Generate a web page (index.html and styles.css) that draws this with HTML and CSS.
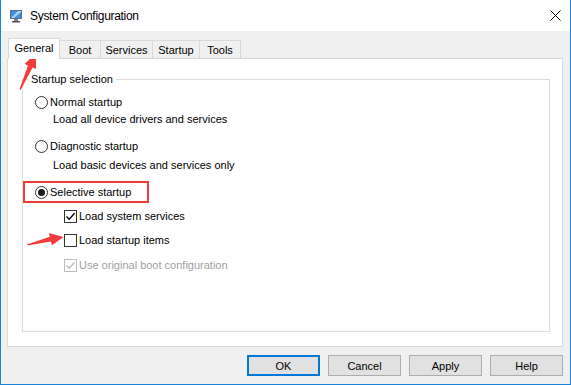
FILE: index.html
```html
<!DOCTYPE html>
<html lang="en">

<head>
    <meta charset="UTF-8">
    <title>System Configuration</title>
    <link rel="stylesheet" href="styles.css">
</head>

<body>
    <div class="window">
        <div class="titlebar">
            <svg class="app-icon" width="14" height="14" viewBox="0 0 14 14">
                <rect x="1" y="1" width="12" height="9" fill="#5d6f86" />
                <rect x="2" y="2" width="10" height="7" fill="#3f8ee0" />
                <path d="M2 9 L9 2 L12 2 L12 3 L5 9 Z" fill="#a9d3f7" />
                <rect x="5" y="10" width="4" height="2" fill="#7a7f86" />
                <rect x="3" y="12" width="8" height="1.5" fill="#4f5459" />
            </svg>
            <span class="title">System Configuration</span>
            <svg class="close" width="11" height="11" viewBox="0 0 11 11">
                <path d="M0.5 0.5 L10.5 10.5 M10.5 0.5 L0.5 10.5" stroke="#000" stroke-width="1" />
            </svg>
        </div>

        <div class="content">
            <div class="tabs">
                <div class="tab tab_active tab-general">General</div>
                <div class="tab tab-boot">Boot</div>
                <div class="tab tab-services">Services</div>
                <div class="tab tab-startup">Startup</div>
                <div class="tab tab-tools">Tools</div>
            </div>

            <div class="panel">
                <fieldset class="group">
                    <legend>Startup selection</legend>

                    <div class="option row-normal">
                        <span class="radio"></span>Normal startup
                    </div>
                    <div class="desc row-normal-desc">Load all device drivers and services</div>

                    <div class="option row-diag">
                        <span class="radio"></span>Diagnostic startup
                    </div>
                    <div class="desc row-diag-desc">Load basic devices and services only</div>

                    <div class="option row-selective">
                        <span class="radio radio_checked"></span>Selective startup
                    </div>

                    <div class="check-row row-services">
                        <span class="checkbox">
                            <svg width="11" height="11" viewBox="0 0 11 11">
                                <path d="M1.5 5.5 L4.2 8.3 L9.6 2.3" fill="none" stroke="#000" stroke-width="1.3" />
                            </svg>
                        </span>Load system services
                    </div>
                    <div class="check-row row-items">
                        <span class="checkbox"></span>Load startup items
                    </div>
                    <div class="check-row check_disabled row-boot">
                        <span class="checkbox">
                            <svg width="11" height="11" viewBox="0 0 11 11">
                                <path d="M1.5 5.5 L4.2 8.3 L9.6 2.3" fill="none" stroke="#bcbcbc" stroke-width="1.3" />
                            </svg>
                        </span>Use original boot configuration
                    </div>
                </fieldset>
            </div>

            <div class="buttons">
                <button class="btn btn_default">OK</button>
                <button class="btn">Cancel</button>
                <button class="btn">Apply</button>
                <button class="btn">Help</button>
            </div>
        </div>

        <!-- Red annotations drawn over the dialog. -->
        <svg class="annotations" width="571" height="385" viewBox="0 0 571 385">
            <polygon points="36,53 36,69 32.6,67.6 20.6,90 19.4,89.4 28,65.6 24.6,64" fill="#f23c3c" />
            <polygon points="63.5,237 52,245.2 51,241.6 27.5,245.6 27,244.4 49.8,236.8 48.9,233" fill="#f23c3c" />
            <rect x="24" y="182" width="124" height="20" fill="none" stroke="#f23c3c" stroke-width="2" />
        </svg>
    </div>
</body>

</html>
```

FILE: styles.css
```css
* {
    box-sizing: border-box;
}

body {
    margin: 0;
    font-family: "Segoe UI", "Liberation Sans", Arial, sans-serif;
    font-size: 11px;
    color: #000;
    background-color: #f0f0f0;
}

.window {
    position: relative;
    width: 571px;
    height: 385px;
    display: flex;
    flex-direction: column;
    border: 1px solid #1883d7;
    border-top: none;
    background-color: #f0f0f0;
}

.titlebar {
    height: 31px;
    flex-shrink: 0;
    display: flex;
    align-items: center;
    padding-left: 8px;
    padding-right: 9px;
    background-color: white;
}

.app-icon {
    margin-right: 7px;
}

.title {
    flex: 1;
    font-size: 12px;
    letter-spacing: -0.3px;
}

.content {
    flex: 1;
    display: flex;
    flex-direction: column;
    padding: 7px 7px 8px 6px;
}

.tabs {
    height: 21px;
    margin-bottom: -1px;
    padding-left: 1px;
    display: flex;
    align-items: flex-end;
}

.tab {
    height: 19px;
    margin-left: -1px;
    display: flex;
    align-items: center;
    justify-content: center;
    border: 1px solid #d9d9d9;
    border-bottom: none;
    background-color: #f0f0f0;
}

.tab:first-child {
    margin-left: 0;
}

.tab_active {
    position: relative;
    z-index: 1;
    height: 21px;
    padding-bottom: 2px;
    background-color: white;
}

.tab-general {
    width: 52px;
}

.tab-boot {
    width: 42px;
}

.tab-services {
    width: 53px;
}

.tab-startup {
    width: 48px;
}

.tab-tools {
    width: 42px;
}

.panel {
    height: 289px;
    display: flex;
    flex-direction: column;
    padding: 12px 12px 14px 14px;
    border: 1px solid #d9d9d9;
    background-color: white;
}

.group {
    flex: 1;
    margin: 0;
    padding: 7px 12px 0 12px;
    border: 1px solid #dcdcdc;
    min-width: 0;
}

.group legend {
    margin-left: -7px;
    padding: 0 3px;
    line-height: 16px;
}

.option,
.desc,
.check-row {
    height: 16px;
    line-height: 16px;
    display: flex;
    align-items: center;
}

.desc {
    padding-left: 18px;
}

.check-row {
    padding-left: 29px;
}

.radio {
    width: 13px;
    height: 13px;
    margin-right: 2px;
    display: flex;
    justify-content: center;
    align-items: center;
    border: 1px solid #333;
    border-radius: 50%;
    background-color: white;
}

.radio_checked::after {
    content: "";
    width: 7px;
    height: 7px;
    border-radius: 50%;
    background-color: #1a1a1a;
}

.checkbox {
    width: 13px;
    height: 13px;
    margin-right: 2px;
    display: flex;
    justify-content: center;
    align-items: center;
    border: 1px solid #333;
    background-color: white;
}

.check_disabled {
    color: #a0a0a0;
}

.check_disabled .checkbox {
    border-color: #bcbcbc;
}

.row-normal-desc {
    margin-top: 1px;
}

.row-diag {
    margin-top: 11px;
}

.row-diag-desc {
    margin-top: 3px;
}

.row-selective {
    margin-top: 11px;
}

.row-services {
    margin-top: 8px;
}

.row-items {
    margin-top: 8px;
}

.row-boot {
    margin-top: 9px;
}

.buttons {
    margin-top: 8px;
    display: flex;
    justify-content: flex-end;
    gap: 8px;
}

.btn {
    width: 73px;
    height: 21px;
    padding: 0;
    font-family: inherit;
    font-size: 11px;
    color: #000;
    border: 1px solid #adadad;
    background-color: #e1e1e1;
}

.btn_default {
    border: 2px solid #0078d7;
}

.annotations {
    position: absolute;
    left: -1px;
    top: 0;
    pointer-events: none;
}
```
